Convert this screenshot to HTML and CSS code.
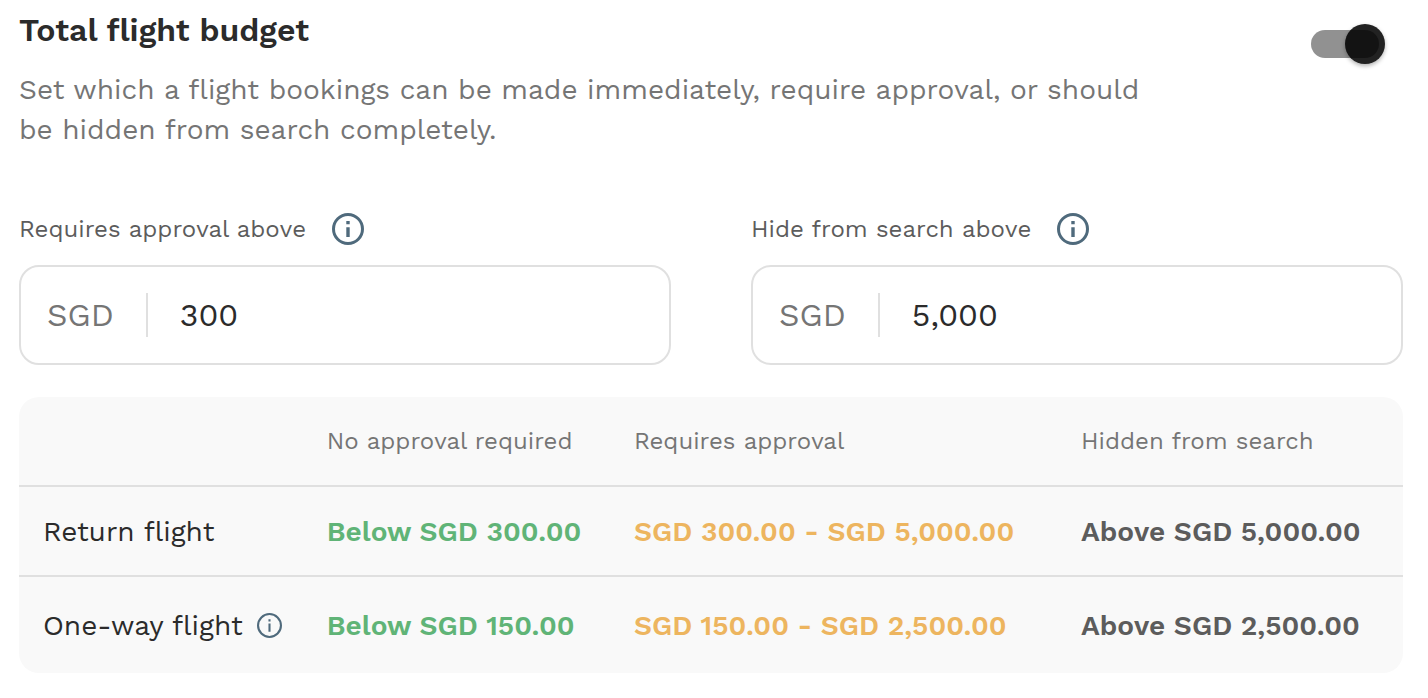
FILE: index.html
```
<!DOCTYPE html>
<html lang="en">
<head>
    <meta charset="UTF-8">
    <meta name="viewport" content="width=device-width, initial-scale=1.0">
    <title>Total flight budget</title>
    <link rel="stylesheet" href="styles.css">
</head>
<body>
    <header class="header">
        <div class="intro">
            <h1><label for="budgetToggle">Total flight budget</label></h1>
            <p>Set which a flight bookings can be made immediately, require approval, or should be hidden from search completely.</p>
        </div>
        <input type="checkbox" role="switch" class="switch" id="budgetToggle" checked>
    </header>

    <div class="fields">
        <div class="field">
            <div class="field-label">
                <label for="approvalAbove">Requires approval above</label>
                <button type="button" class="info" aria-label="About requires approval above">
                    <svg viewBox="0 0 32 32" width="32" height="32">
                        <circle cx="16" cy="16" r="14.5" fill="none" stroke="currentColor" stroke-width="3"/>
                        <path d="M14.3 8h3.4v3.2h-3.4zM14.3 14.2h3.4v9.8h-3.4z" fill="currentColor"/>
                    </svg>
                </button>
            </div>
            <div class="input-box">
                <span class="currency">SGD</span>
                <input type="text" id="approvalAbove" inputmode="numeric" value="300">
            </div>
        </div>
        <div class="field">
            <div class="field-label">
                <label for="hideAbove">Hide from search above</label>
                <button type="button" class="info" aria-label="About hide from search above">
                    <svg viewBox="0 0 32 32" width="32" height="32">
                        <circle cx="16" cy="16" r="14.5" fill="none" stroke="currentColor" stroke-width="3"/>
                        <path d="M14.3 8h3.4v3.2h-3.4zM14.3 14.2h3.4v9.8h-3.4z" fill="currentColor"/>
                    </svg>
                </button>
            </div>
            <div class="input-box">
                <span class="currency">SGD</span>
                <input type="text" id="hideAbove" inputmode="numeric" value="5,000">
            </div>
        </div>
    </div>

    <table class="summary">
        <colgroup>
            <col class="col-type">
            <col class="col-none">
            <col class="col-approval">
            <col class="col-hidden">
        </colgroup>
        <thead>
            <tr>
                <td></td>
                <th scope="col">No approval required</th>
                <th scope="col">Requires approval</th>
                <th scope="col">Hidden from search</th>
            </tr>
        </thead>
        <tbody>
            <tr>
                <th scope="row">Return flight</th>
                <td class="allowed">Below SGD 300.00</td>
                <td class="approval">SGD 300.00 - SGD 5,000.00</td>
                <td class="hidden-search">Above SGD 5,000.00</td>
            </tr>
            <tr>
                <th scope="row">
                    <div class="row-label">
                        One-way flight
                        <button type="button" class="info" aria-label="About one-way flight">
                            <svg viewBox="0 0 24 24" width="25" height="25">
                                <circle cx="12" cy="12" r="11" fill="none" stroke="currentColor" stroke-width="2"/>
                                <path d="M11 6h2v2.2h-2zM11 10h2v8h-2z" fill="currentColor"/>
                            </svg>
                        </button>
                    </div>
                </th>
                <td class="allowed">Below SGD 150.00</td>
                <td class="approval">SGD 150.00 - SGD 2,500.00</td>
                <td class="hidden-search">Above SGD 2,500.00</td>
            </tr>
        </tbody>
    </table>
</body>
</html>
```
FILE: styles.css
```
:root {
    --text: #2b2b2b;
    --muted: #757575;
    --dark-muted: #5c5c5c;
    --border: #e0e0e0;
    --surface: #f9f9f9;
    --info: #4f6a7c;
    --green: #60b477;
    --orange: #edb55f;
}

* {
    margin: 0;
    padding: 0;
    box-sizing: border-box;
}

body {
    background: white;
    color: var(--text);
    font-family: "Work Sans", Inter, sans-serif;
    padding: 10px 25px 24px 19px;
}

.header {
    display: flex;
    justify-content: space-between;
    align-items: flex-start;
    padding-right: 18px;
    margin-bottom: 60px;
}

.intro {
    max-width: 1150px;
}

h1 {
    font-size: 32px;
    line-height: 40px;
    font-weight: 600;
    margin-bottom: 20px;
}

p {
    font-size: 28px;
    line-height: 40px;
    color: var(--muted);
}

.switch {
    appearance: none;
    display: grid;
    align-items: center;
    flex: none;
    width: 74px;
    height: 40px;
    margin-top: 14px;
    cursor: pointer;
}

.switch::before,
.switch::after {
    content: "";
    grid-area: 1 / 1;
}

/* the track is see-through and lies over the thumb */
.switch::before {
    z-index: 1;
    width: 68px;
    height: 28px;
    border-radius: 14px;
    background: rgba(0, 0, 0, 0.43);
}

.switch::after {
    width: 40px;
    height: 40px;
    border-radius: 50%;
    background: #222;
    box-shadow: 0 2px 4px rgba(0, 0, 0, 0.3);
}

.switch:checked::after {
    justify-self: end;
}

.fields {
    display: grid;
    grid-template-columns: 1fr 1fr;
    gap: 80px;
    margin-bottom: 32px;
}

.field-label {
    display: flex;
    align-items: center;
    gap: 26px;
    height: 38px;
    margin-bottom: 17px;
    font-size: 24px;
    color: var(--dark-muted);
}

.info {
    display: flex;
    border: none;
    background: none;
    color: var(--info);
    cursor: pointer;
}

.input-box {
    display: flex;
    align-items: center;
    height: 100px;
    padding: 0 26px;
    border: 2px solid var(--border);
    border-radius: 20px;
    font-size: 32px;
}

.currency {
    color: var(--muted);
    line-height: 44px;
    padding-right: 32px;
    border-right: 2px solid var(--border);
}

.input-box input {
    flex: 1;
    min-width: 0;
    padding-left: 32px;
    border: none;
    outline: none;
    background: none;
    color: var(--text);
    font: inherit;
}

.summary {
    width: 100%;
    table-layout: fixed;
    border-collapse: separate;
    border-spacing: 0;
    border-radius: 20px;
    background: var(--surface);
    text-align: left;
    white-space: nowrap;
}

.col-type { width: 20.5%; }
.col-none { width: 22.2%; }
.col-approval { width: 32.3%; }
.col-hidden { width: 25%; }

.summary th,
.summary td {
    height: 90px;
    padding-left: 24px;
    border-bottom: 2px solid var(--border);
    font-size: 28px;
}

.summary th {
    font-weight: 400;
}

.summary td {
    font-weight: 600;
}

.summary thead th {
    font-size: 24px;
    color: var(--muted);
}

.summary tbody tr:last-child th,
.summary tbody tr:last-child td {
    height: 96px;
    border-bottom: none;
}

.row-label {
    display: flex;
    align-items: center;
    gap: 14px;
}

.allowed { color: var(--green); }
.approval { color: var(--orange); }
.hidden-search { color: var(--dark-muted); }
```
